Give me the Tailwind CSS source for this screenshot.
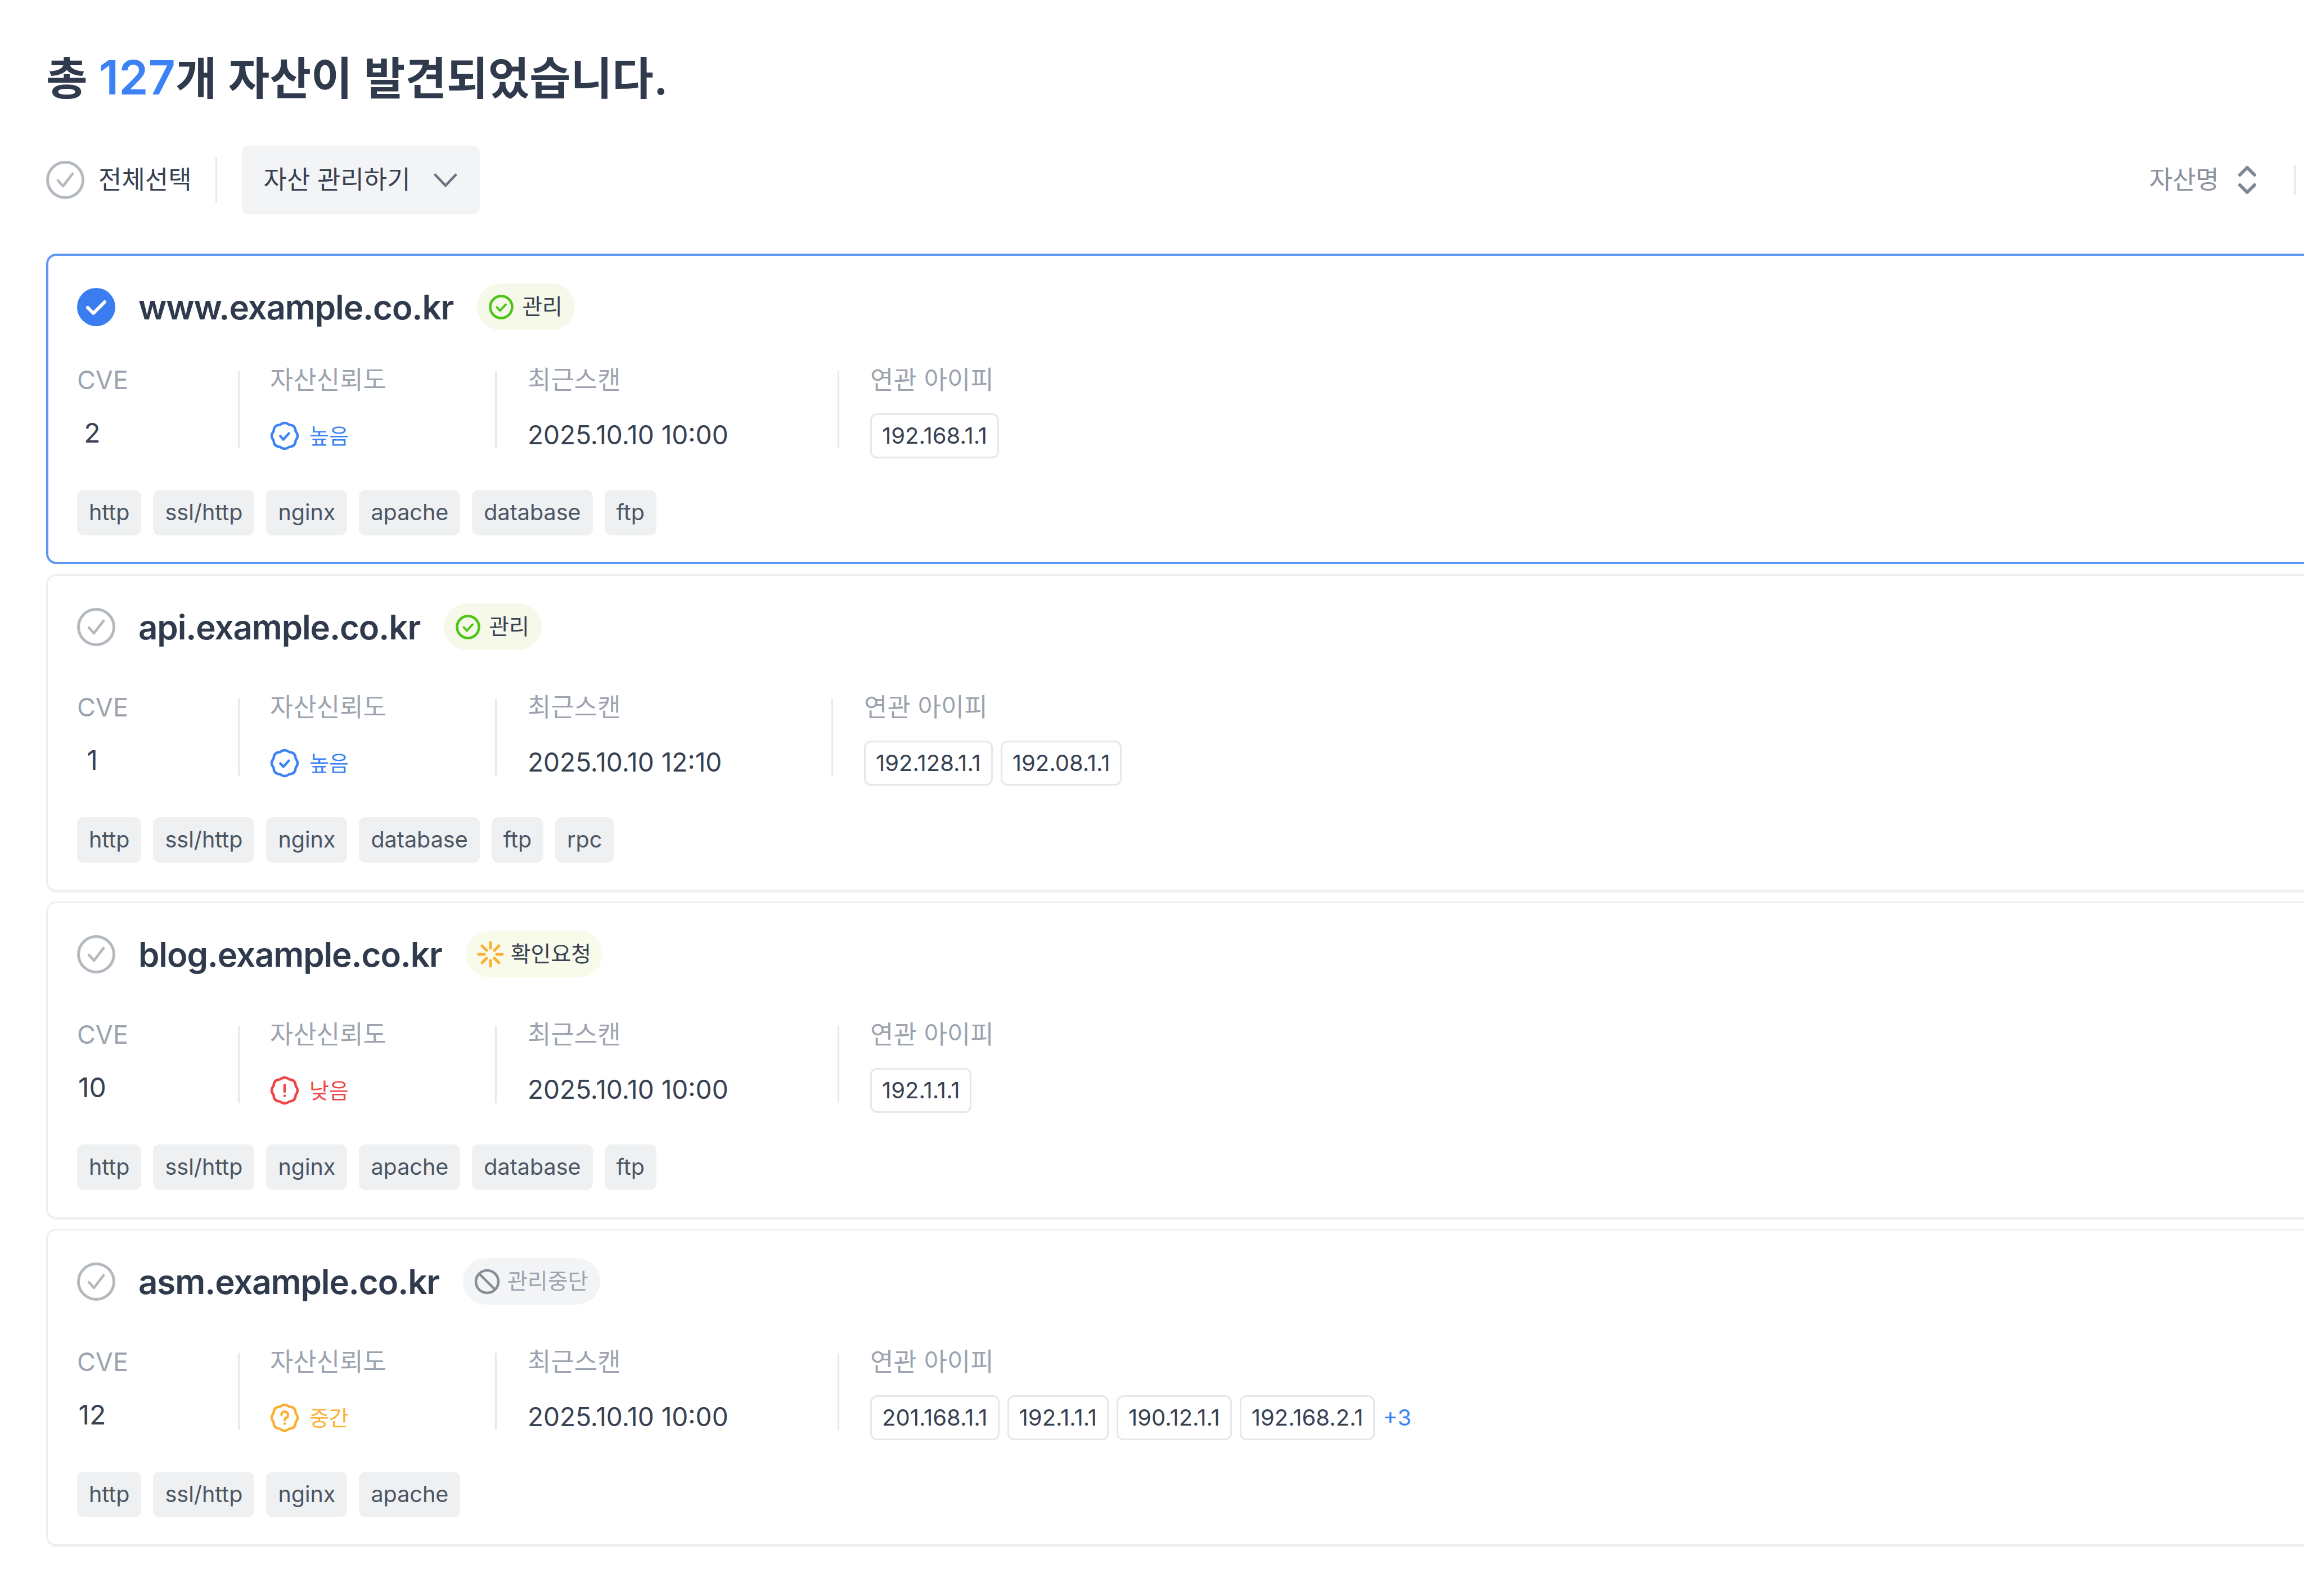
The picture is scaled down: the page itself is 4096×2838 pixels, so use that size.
<!DOCTYPE html>
<html lang="ko">
<head>
    <meta charset="UTF-8">
    <title>자산 목록</title>
    <script src="https://cdn.jsdelivr.net/npm/@tailwindcss/browser@4"></script>
</head>
<body class="bg-white">
<main class="w-[4096px] h-[2838px] overflow-hidden pl-[82px] pt-[96px] font-['Inter','Noto_Sans_CJK_KR',sans-serif] text-[#374151]">
    <h1 class="h-[84px] leading-[84px] text-[80px] font-semibold text-[#2f3a4c]">총 <span class="text-[84px] text-[#3b82f6]">127</span>개 자산이 발견되었습니다.</h1>

    <!-- toolbar -->
    <div class="mt-[79px] w-[4000px] h-[122px] flex items-center justify-between">
        <div class="flex items-center">
            <svg class="w-[68px] h-[68px] text-[#b4b9c0]" viewBox="0 0 68 68" fill="none" stroke="currentColor"><circle cx="34" cy="34" r="31.5" stroke-width="5"/><path d="M21 35l9 10 17-22" stroke-width="4.5" stroke-linecap="round" stroke-linejoin="round"/></svg>
            <span class="ml-[25px] text-[45px] leading-[60px]">전체선택</span>
            <div class="ml-[42px] w-[3px] h-[80px] bg-[#e5e7eb]"></div>
            <button class="ml-[44px] h-[122px] w-[423px] pl-[39px] flex items-center rounded-[12px] bg-[#f3f4f6] text-[45px]">
                <span>자산 관리하기</span>
                <svg class="ml-[38px] w-[48px] h-[48px] text-[#6b7280]" viewBox="0 0 48 48" fill="none" stroke="currentColor" stroke-width="4.5" stroke-linecap="round" stroke-linejoin="round"><path d="M6 15l18 19 18-19"/></svg>
            </button>
        </div>
        <div class="flex items-center">
            <span class="text-[45px] leading-[60px] text-[#8b929c]">자산명</span>
            <svg class="ml-[32px] w-[36px] h-[54px] text-[#7f8791]" viewBox="0 0 36 54" fill="none" stroke="currentColor" stroke-width="6" stroke-linecap="round" stroke-linejoin="round"><path d="M5 18L18 5l13 13M5 36l13 13 13-13"/></svg>
            <div class="ml-[65px] w-[4px] h-[54px] bg-[#e9eaec]"></div>
        </div>
    </div>

    <div class="mt-[70px] w-[4200px] flex flex-col gap-[18px]">

        <!-- www -->
        <section class="h-[552px] border-[4px] border-[#5f97f5] rounded-[18px] pl-[51px] pt-[49px]">
            <div class="h-[83px] flex items-center">
                <svg class="w-[68px] h-[68px]" viewBox="0 0 68 68" fill="none"><circle cx="34" cy="34" r="34" fill="#3b7df0"/><path d="M19 35l10 10 20-20" stroke="#fff" stroke-width="6" stroke-linecap="round" stroke-linejoin="round"/></svg>
                <h2 class="ml-[41px] text-[60px] leading-[80px] font-semibold tracking-[-1.1px] text-[#2f3a4c]">www.example.co.kr</h2>
                <span class="ml-[42px] h-[83px] pl-[21px] pr-[22px] flex items-center gap-[15px] rounded-full bg-[#f6f9ea] text-[39px]">
                    <svg class="w-[44px] h-[44px] text-[#4cc414]" viewBox="0 0 44 44" fill="none" stroke="currentColor"><circle cx="22" cy="22" r="19.5" stroke-width="4.5"/><path d="M14.5 22.5l5.5 6 10-11" stroke-width="4" stroke-linecap="round" stroke-linejoin="round"/></svg>
                    관리
                </span>
            </div>
            <div class="mt-[73px] h-[153px] flex items-start">
                <div class="w-[286px]">
                    <div class="text-[45px] leading-[32px] text-[#9ca3af]">CVE</div>
                    <div class="mt-[43px] h-[80px] w-[54px] pb-[10px] flex items-center justify-center text-[48px]">2</div>
                </div>
                <div class="w-[3px] h-[137px] bg-[#e5e7eb]"></div>
                <div class="ml-[54px] w-[400px]">
                    <div class="text-[45px] leading-[32px] text-[#9ca3af]">자산신뢰도</div>
                    <div class="mt-[43px] h-[80px] flex items-center gap-[18px] text-[38px] text-[#3b82f6]">
                        <svg class="w-[52px] h-[52px]" viewBox="0 0 24 24" fill="none" stroke="currentColor" stroke-width="2" stroke-linecap="round" stroke-linejoin="round"><path d="M21.05 8.25Q24.2 12 21.05 15.75Q20.9 20.9 15.75 21.05Q12 24.2 8.25 21.05Q3.1 20.9 2.95 15.75Q-.2 12 2.95 8.25Q3.1 3.1 8.25 2.95Q12-.2 15.75 2.95Q20.9 3.1 21.05 8.25Z"/><path d="M8.5 12.2l2.5 2.8 4.5-5"/></svg>
                        높음
                    </div>
                </div>
                <div class="w-[3px] h-[137px] bg-[#e5e7eb]"></div>
                <div class="ml-[55px] w-[551px]">
                    <div class="text-[45px] leading-[32px] text-[#9ca3af]">최근스캔</div>
                    <div class="mt-[41px] h-[80px] flex items-center text-[46px]">2025.10.10 10:00</div>
                </div>
                <div class="w-[3px] h-[137px] bg-[#e5e7eb]"></div>
                <div class="ml-[55px]">
                    <div class="text-[45px] leading-[32px] text-[#9ca3af]">연관 아이피</div>
                    <div class="mt-[43px] h-[80px] flex items-center gap-[14px] text-[40px]">
                        <span class="h-[80px] px-[18px] flex items-center border-[3px] border-[#e5e7eb] rounded-[12px]">192.168.1.1</span>
                    </div>
                </div>
            </div>
            <div class="mt-[58px] flex gap-[21px] text-[39.5px] text-[#4b5563]">
                <span class="h-[81px] px-[21px] flex items-center rounded-[12px] bg-[#eef0f2]">http</span>
                <span class="h-[81px] px-[21px] flex items-center rounded-[12px] bg-[#eef0f2]">ssl/http</span>
                <span class="h-[81px] px-[21px] flex items-center rounded-[12px] bg-[#eef0f2]">nginx</span>
                <span class="h-[81px] px-[21px] flex items-center rounded-[12px] bg-[#eef0f2]">apache</span>
                <span class="h-[81px] px-[21px] flex items-center rounded-[12px] bg-[#eef0f2]">database</span>
                <span class="h-[81px] px-[21px] flex items-center rounded-[12px] bg-[#eef0f2]">ftp</span>
            </div>
        </section>

        <!-- api -->
        <section class="h-[564px] border-[3px] border-[#eceef0] rounded-[18px] shadow-[0_2px_0_#f1f2f4] pl-[52px] pt-[49px]">
            <div class="h-[83px] flex items-center">
                <svg class="w-[68px] h-[68px] text-[#b4b9c0]" viewBox="0 0 68 68" fill="none" stroke="currentColor"><circle cx="34" cy="34" r="31.5" stroke-width="5"/><path d="M21 35l9 10 17-22" stroke-width="4.5" stroke-linecap="round" stroke-linejoin="round"/></svg>
                <h2 class="ml-[41px] text-[60px] leading-[80px] font-semibold tracking-[-1.1px] text-[#2f3a4c]">api.example.co.kr</h2>
                <span class="ml-[42px] h-[83px] pl-[21px] pr-[22px] flex items-center gap-[15px] rounded-full bg-[#f6f9ea] text-[39px]">
                    <svg class="w-[44px] h-[44px] text-[#4cc414]" viewBox="0 0 44 44" fill="none" stroke="currentColor"><circle cx="22" cy="22" r="19.5" stroke-width="4.5"/><path d="M14.5 22.5l5.5 6 10-11" stroke-width="4" stroke-linecap="round" stroke-linejoin="round"/></svg>
                    관리
                </span>
            </div>
            <div class="mt-[86px] h-[153px] flex items-start">
                <div class="w-[286px]">
                    <div class="text-[45px] leading-[32px] text-[#9ca3af]">CVE</div>
                    <div class="mt-[43px] h-[80px] w-[54px] pb-[10px] flex items-center justify-center text-[48px]">1</div>
                </div>
                <div class="w-[3px] h-[137px] bg-[#e5e7eb]"></div>
                <div class="ml-[54px] w-[400px]">
                    <div class="text-[45px] leading-[32px] text-[#9ca3af]">자산신뢰도</div>
                    <div class="mt-[43px] h-[80px] flex items-center gap-[18px] text-[38px] text-[#3b82f6]">
                        <svg class="w-[52px] h-[52px]" viewBox="0 0 24 24" fill="none" stroke="currentColor" stroke-width="2" stroke-linecap="round" stroke-linejoin="round"><path d="M21.05 8.25Q24.2 12 21.05 15.75Q20.9 20.9 15.75 21.05Q12 24.2 8.25 21.05Q3.1 20.9 2.95 15.75Q-.2 12 2.95 8.25Q3.1 3.1 8.25 2.95Q12-.2 15.75 2.95Q20.9 3.1 21.05 8.25Z"/><path d="M8.5 12.2l2.5 2.8 4.5-5"/></svg>
                        높음
                    </div>
                </div>
                <div class="w-[3px] h-[137px] bg-[#e5e7eb]"></div>
                <div class="ml-[55px] w-[540px]">
                    <div class="text-[45px] leading-[32px] text-[#9ca3af]">최근스캔</div>
                    <div class="mt-[41px] h-[80px] flex items-center text-[46px]">2025.10.10 12:10</div>
                </div>
                <div class="w-[3px] h-[137px] bg-[#e5e7eb]"></div>
                <div class="ml-[55px]">
                    <div class="text-[45px] leading-[32px] text-[#9ca3af]">연관 아이피</div>
                    <div class="mt-[43px] h-[80px] flex items-center gap-[14px] text-[40px]">
                        <span class="h-[80px] px-[18px] flex items-center border-[3px] border-[#e5e7eb] rounded-[12px]">192.128.1.1</span>
                        <span class="h-[80px] px-[18px] flex items-center border-[3px] border-[#e5e7eb] rounded-[12px]">192.08.1.1</span>
                    </div>
                </div>
            </div>
            <div class="mt-[58px] flex gap-[21px] text-[39.5px] text-[#4b5563]">
                <span class="h-[81px] px-[21px] flex items-center rounded-[12px] bg-[#eef0f2]">http</span>
                <span class="h-[81px] px-[21px] flex items-center rounded-[12px] bg-[#eef0f2]">ssl/http</span>
                <span class="h-[81px] px-[21px] flex items-center rounded-[12px] bg-[#eef0f2]">nginx</span>
                <span class="h-[81px] px-[21px] flex items-center rounded-[12px] bg-[#eef0f2]">database</span>
                <span class="h-[81px] px-[21px] flex items-center rounded-[12px] bg-[#eef0f2]">ftp</span>
                <span class="h-[81px] px-[21px] flex items-center rounded-[12px] bg-[#eef0f2]">rpc</span>
            </div>
        </section>

        <!-- blog -->
        <section class="h-[564px] border-[3px] border-[#eceef0] rounded-[18px] shadow-[0_2px_0_#f1f2f4] pl-[52px] pt-[49px]">
            <div class="h-[83px] flex items-center">
                <svg class="w-[68px] h-[68px] text-[#b4b9c0]" viewBox="0 0 68 68" fill="none" stroke="currentColor"><circle cx="34" cy="34" r="31.5" stroke-width="5"/><path d="M21 35l9 10 17-22" stroke-width="4.5" stroke-linecap="round" stroke-linejoin="round"/></svg>
                <h2 class="ml-[41px] text-[60px] leading-[80px] font-semibold tracking-[-1.1px] text-[#2f3a4c]">blog.example.co.kr</h2>
                <span class="ml-[42px] h-[83px] pl-[20px] pr-[20px] flex items-center gap-[12px] rounded-full bg-[#f8faea] text-[39px]">
                    <svg class="w-[48px] h-[48px] text-[#fbb033]" viewBox="0 0 48 48" fill="none" stroke="currentColor" stroke-width="5" stroke-linecap="round"><path d="M24 3v10M24 35v10M3 24h10M35 24h10M9 9l8 8M31 31l8 8M39 9l-8 8M17 31l-8 8"/></svg>
                    확인요청
                </span>
            </div>
            <div class="mt-[86px] h-[153px] flex items-start">
                <div class="w-[286px]">
                    <div class="text-[45px] leading-[32px] text-[#9ca3af]">CVE</div>
                    <div class="mt-[43px] h-[80px] w-[54px] pb-[10px] flex items-center justify-center text-[48px]">10</div>
                </div>
                <div class="w-[3px] h-[137px] bg-[#e5e7eb]"></div>
                <div class="ml-[54px] w-[400px]">
                    <div class="text-[45px] leading-[32px] text-[#9ca3af]">자산신뢰도</div>
                    <div class="mt-[43px] h-[80px] flex items-center gap-[18px] text-[38px] text-[#ef4444]">
                        <svg class="w-[52px] h-[52px]" viewBox="0 0 24 24" fill="none" stroke="currentColor" stroke-width="2" stroke-linecap="round" stroke-linejoin="round"><path d="M21.05 8.25Q24.2 12 21.05 15.75Q20.9 20.9 15.75 21.05Q12 24.2 8.25 21.05Q3.1 20.9 2.95 15.75Q-.2 12 2.95 8.25Q3.1 3.1 8.25 2.95Q12-.2 15.75 2.95Q20.9 3.1 21.05 8.25Z"/><path d="M12 7.5v5.5M12 16.4v.1"/></svg>
                        낮음
                    </div>
                </div>
                <div class="w-[3px] h-[137px] bg-[#e5e7eb]"></div>
                <div class="ml-[55px] w-[551px]">
                    <div class="text-[45px] leading-[32px] text-[#9ca3af]">최근스캔</div>
                    <div class="mt-[41px] h-[80px] flex items-center text-[46px]">2025.10.10 10:00</div>
                </div>
                <div class="w-[3px] h-[137px] bg-[#e5e7eb]"></div>
                <div class="ml-[55px]">
                    <div class="text-[45px] leading-[32px] text-[#9ca3af]">연관 아이피</div>
                    <div class="mt-[43px] h-[80px] flex items-center gap-[14px] text-[40px]">
                        <span class="h-[80px] px-[18px] flex items-center border-[3px] border-[#e5e7eb] rounded-[12px]">192.1.1.1</span>
                    </div>
                </div>
            </div>
            <div class="mt-[58px] flex gap-[21px] text-[39.5px] text-[#4b5563]">
                <span class="h-[81px] px-[21px] flex items-center rounded-[12px] bg-[#eef0f2]">http</span>
                <span class="h-[81px] px-[21px] flex items-center rounded-[12px] bg-[#eef0f2]">ssl/http</span>
                <span class="h-[81px] px-[21px] flex items-center rounded-[12px] bg-[#eef0f2]">nginx</span>
                <span class="h-[81px] px-[21px] flex items-center rounded-[12px] bg-[#eef0f2]">apache</span>
                <span class="h-[81px] px-[21px] flex items-center rounded-[12px] bg-[#eef0f2]">database</span>
                <span class="h-[81px] px-[21px] flex items-center rounded-[12px] bg-[#eef0f2]">ftp</span>
            </div>
        </section>

        <!-- asm -->
        <section class="h-[564px] border-[3px] border-[#eceef0] rounded-[18px] shadow-[0_2px_0_#f1f2f4] pl-[52px] pt-[49px]">
            <div class="h-[83px] flex items-center">
                <svg class="w-[68px] h-[68px] text-[#b4b9c0]" viewBox="0 0 68 68" fill="none" stroke="currentColor"><circle cx="34" cy="34" r="31.5" stroke-width="5"/><path d="M21 35l9 10 17-22" stroke-width="4.5" stroke-linecap="round" stroke-linejoin="round"/></svg>
                <h2 class="ml-[41px] text-[60px] leading-[80px] font-semibold tracking-[-1.1px] text-[#2f3a4c]">asm.example.co.kr</h2>
                <span class="ml-[42px] h-[83px] pl-[20px] pr-[22px] flex items-center gap-[13px] rounded-full bg-[#f3f4f6] text-[39px] text-[#9ca3af]">
                    <svg class="w-[46px] h-[46px] text-[#868d97]" viewBox="0 0 46 46" fill="none" stroke="currentColor" stroke-width="4.5"><circle cx="23" cy="23" r="20"/><path d="M9 9l28 28"/></svg>
                    관리중단
                </span>
            </div>
            <div class="mt-[86px] h-[153px] flex items-start">
                <div class="w-[286px]">
                    <div class="text-[45px] leading-[32px] text-[#9ca3af]">CVE</div>
                    <div class="mt-[43px] h-[80px] w-[54px] pb-[10px] flex items-center justify-center text-[48px]">12</div>
                </div>
                <div class="w-[3px] h-[137px] bg-[#e5e7eb]"></div>
                <div class="ml-[54px] w-[400px]">
                    <div class="text-[45px] leading-[32px] text-[#9ca3af]">자산신뢰도</div>
                    <div class="mt-[43px] h-[80px] flex items-center gap-[18px] text-[38px] text-[#fbb033]">
                        <svg class="w-[52px] h-[52px]" viewBox="0 0 24 24" fill="none" stroke="currentColor" stroke-width="2" stroke-linecap="round" stroke-linejoin="round"><path d="M21.05 8.25Q24.2 12 21.05 15.75Q20.9 20.9 15.75 21.05Q12 24.2 8.25 21.05Q3.1 20.9 2.95 15.75Q-.2 12 2.95 8.25Q3.1 3.1 8.25 2.95Q12-.2 15.75 2.95Q20.9 3.1 21.05 8.25Z"/><path d="M9.4 9.6a2.7 2.7 0 1 1 3.9 2.5c-.9.5-1.3 1-1.3 1.9M12 16.8v.1"/></svg>
                        중간
                    </div>
                </div>
                <div class="w-[3px] h-[137px] bg-[#e5e7eb]"></div>
                <div class="ml-[55px] w-[551px]">
                    <div class="text-[45px] leading-[32px] text-[#9ca3af]">최근스캔</div>
                    <div class="mt-[41px] h-[80px] flex items-center text-[46px]">2025.10.10 10:00</div>
                </div>
                <div class="w-[3px] h-[137px] bg-[#e5e7eb]"></div>
                <div class="ml-[55px]">
                    <div class="text-[45px] leading-[32px] text-[#9ca3af]">연관 아이피</div>
                    <div class="mt-[43px] h-[80px] flex items-center gap-[14px] text-[40px]">
                        <span class="h-[80px] px-[18px] flex items-center border-[3px] border-[#e5e7eb] rounded-[12px]">201.168.1.1</span>
                        <span class="h-[80px] px-[18px] flex items-center border-[3px] border-[#e5e7eb] rounded-[12px]">192.1.1.1</span>
                        <span class="h-[80px] px-[18px] flex items-center border-[3px] border-[#e5e7eb] rounded-[12px]">190.12.1.1</span>
                        <span class="h-[80px] px-[18px] flex items-center border-[3px] border-[#e5e7eb] rounded-[12px]">192.168.2.1</span>
                        <span class="text-[#3b82f6]">+3</span>
                    </div>
                </div>
            </div>
            <div class="mt-[58px] flex gap-[21px] text-[39.5px] text-[#4b5563]">
                <span class="h-[81px] px-[21px] flex items-center rounded-[12px] bg-[#eef0f2]">http</span>
                <span class="h-[81px] px-[21px] flex items-center rounded-[12px] bg-[#eef0f2]">ssl/http</span>
                <span class="h-[81px] px-[21px] flex items-center rounded-[12px] bg-[#eef0f2]">nginx</span>
                <span class="h-[81px] px-[21px] flex items-center rounded-[12px] bg-[#eef0f2]">apache</span>
            </div>
        </section>
    </div>
</main>
</body>
</html>
